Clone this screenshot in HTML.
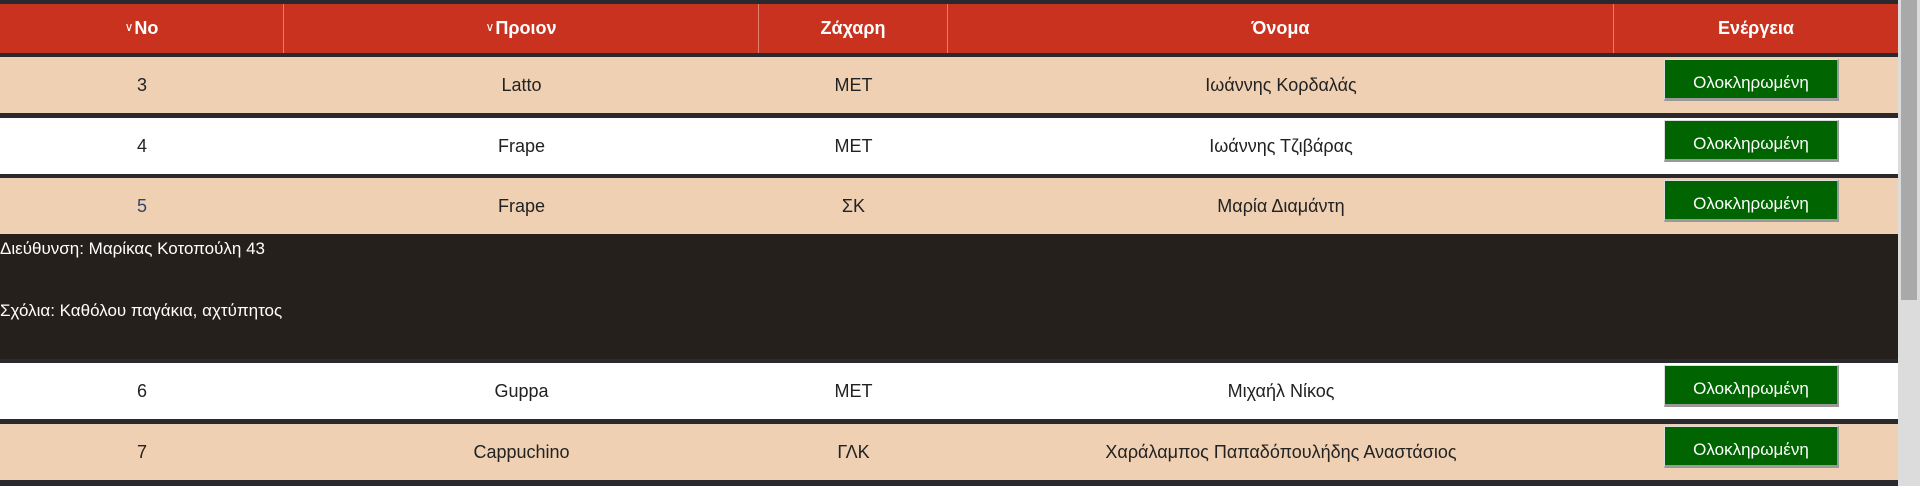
<!DOCTYPE html>
<html><head><meta charset="utf-8"><style>
*{margin:0;padding:0;box-sizing:border-box}
body{width:1920px;height:486px;overflow:hidden;background:#2a2a2e;font-family:"Liberation Sans",sans-serif;position:relative}
.hdr{position:absolute;left:0;top:4px;width:1898px;height:49px;background:#c9321e;color:#fff;font-weight:bold;font-size:18px}
.row{position:absolute;left:0;width:1898px;height:56px;font-size:18px;color:#222}
.c{position:absolute;top:0;height:100%;display:flex;align-items:center;justify-content:center}
.hdr .c{border-right:1px solid #e08070}
.ch{font-size:12px;font-weight:normal;margin-right:1px;position:relative;top:-2px}
.beige{background:#efd0b3}.white{background:#fff}
.btn{position:absolute;left:1664px;width:175px;height:42px;background:#006400;color:#fff;font-size:17px;text-align:center;line-height:32px;padding-top:7px;border-right:2px solid #999;border-bottom:3px solid #999;border-top:1px solid #ddd;border-left:1px solid #ddd}
.det{position:absolute;left:0;top:234px;width:1898px;height:125px;background:#26201c;color:#fff;font-size:17px}
.sb{position:absolute;right:0;top:0;width:22px;height:486px;background:#dcdcdc}
.th{position:absolute;right:3px;top:0;width:16px;height:300px;background:#a9a9a9}
</style></head><body>
<div class="hdr">
<div class="c" style="left:0;width:284px"><span class="ch">∨</span>No</div>
<div class="c" style="left:284px;width:475px"><span class="ch">∨</span>Προιον</div>
<div class="c" style="left:759px;width:189px">Ζάχαρη</div>
<div class="c" style="left:948px;width:666px">Όνομα</div>
<div class="c" style="left:1614px;width:284px;border-right:none">Ενέργεια</div>
</div>

<div class="row beige" style="top:57px">
<div class="c" style="left:0;width:284px">3</div><div class="c" style="left:284px;width:475px">Latto</div><div class="c" style="left:759px;width:189px">ΜΕΤ</div><div class="c" style="left:948px;width:666px">Ιωάννης Κορδαλάς</div>
<div class="btn" style="top:2px">Ολοκληρωμένη</div></div>

<div class="row white" style="top:118px">
<div class="c" style="left:0;width:284px">4</div><div class="c" style="left:284px;width:475px">Frape</div><div class="c" style="left:759px;width:189px">ΜΕΤ</div><div class="c" style="left:948px;width:666px">Ιωάννης Τζιβάρας</div>
<div class="btn" style="top:2px">Ολοκληρωμένη</div></div>

<div class="row beige" style="top:178px">
<div class="c" style="left:0;width:284px;color:#2e4a6b">5</div><div class="c" style="left:284px;width:475px">Frape</div><div class="c" style="left:759px;width:189px">ΣΚ</div><div class="c" style="left:948px;width:666px">Μαρία Διαμάντη</div>
<div class="btn" style="top:2px">Ολοκληρωμένη</div></div>

<div class="det">
<div style="position:absolute;left:0;top:5px">Διεύθυνση: Μαρίκας Κοτοπούλη 43</div>
<div style="position:absolute;left:0;top:67px">Σχόλια: Καθόλου παγάκια, αχτύπητος</div>
</div>

<div class="row white" style="top:363px">
<div class="c" style="left:0;width:284px">6</div><div class="c" style="left:284px;width:475px">Guppa</div><div class="c" style="left:759px;width:189px">ΜΕΤ</div><div class="c" style="left:948px;width:666px">Μιχαήλ Νίκος</div>
<div class="btn" style="top:2px">Ολοκληρωμένη</div></div>

<div class="row beige" style="top:424px">
<div class="c" style="left:0;width:284px">7</div><div class="c" style="left:284px;width:475px">Cappuchino</div><div class="c" style="left:759px;width:189px">ΓΛΚ</div><div class="c" style="left:948px;width:666px">Χαράλαμπος Παπαδόπουλήδης Αναστάσιος</div>
<div class="btn" style="top:2px">Ολοκληρωμένη</div></div>

<div class="sb"><div class="th"></div></div>
</body></html>
